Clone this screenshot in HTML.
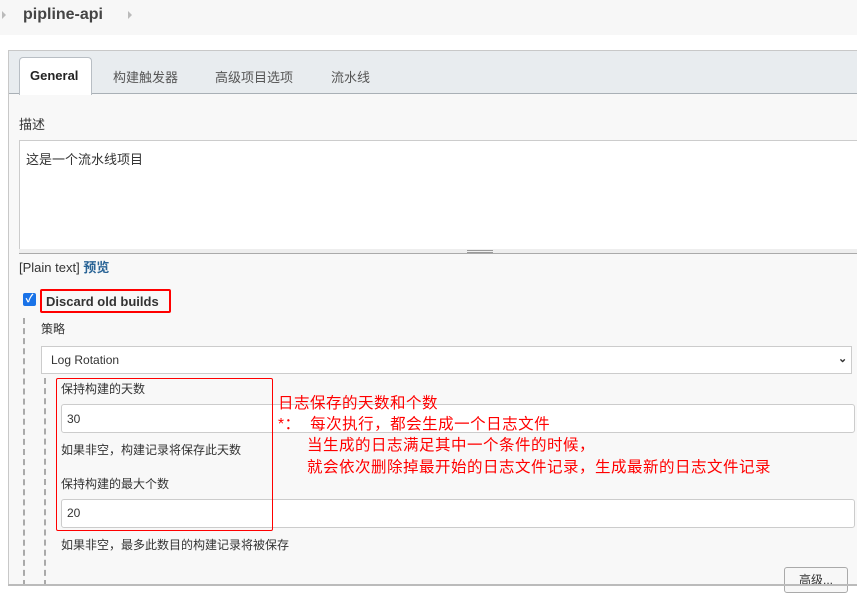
<!DOCTYPE html>
<html><head><meta charset="utf-8"><style>
*{margin:0;padding:0;box-sizing:border-box}
body{width:857px;height:586px;overflow:hidden;background:#fff;font-family:"Liberation Sans","Noto Sans CJK SC",sans-serif;color:#333;position:relative}
.a{position:absolute;white-space:nowrap}
.inp{position:absolute;background:#fff;border:1px solid #ccc;border-radius:3px}
.red{color:#f00;font-size:15.5px;letter-spacing:0.5px}
</style></head><body>
<div class="a" style="left:0;top:0;width:857px;height:35px;background:#f7f7f7"></div>
<div class="a" style="left:2px;top:11px;width:0;height:0;border-left:4px solid #bbb;border-top:4px solid transparent;border-bottom:4px solid transparent"></div>
<div class="a" style="left:128px;top:11px;width:0;height:0;border-left:4px solid #bbb;border-top:4px solid transparent;border-bottom:4px solid transparent"></div>
<div class="a" style="left:23px;top:6px;font-size:16px;font-weight:bold;color:#444">pipline-api</div>

<div class="a" style="left:8px;top:50px;width:860px;height:535px;border:1px solid #c8c8c8;background:#f8f8f8"></div>
<div class="a" style="left:9px;top:51px;width:848px;height:43px;background:#e8ecef;border-bottom:1px solid #a9b0b6"></div>
<div class="a" style="left:19px;top:57px;width:73px;height:38px;background:#fff;border:1px solid #b8bec4;border-bottom:none;border-radius:4px 4px 0 0"></div>
<div class="a" style="left:30px;top:68px;font-size:13px;font-weight:bold;color:#222">General</div>
<div class="a" style="left:113px;top:67px;font-size:13px;color:#555">构建触发器</div>
<div class="a" style="left:215px;top:67px;font-size:13px;color:#555">高级项目选项</div>
<div class="a" style="left:331px;top:67px;font-size:13px;color:#555">流水线</div>

<div class="a" style="left:19px;top:114px;font-size:13px">描述</div>
<div class="inp" style="left:19px;top:140px;width:840px;height:111px;border-radius:0"></div>
<div class="a" style="left:26px;top:149px;font-size:13px">这是一个流水线项目</div>
<div class="a" style="left:19px;top:249px;width:840px;height:5px;background:#eee;border-bottom:1px solid #aaa"></div>
<div class="a" style="left:467px;top:250px;width:26px;height:3px;border-top:1px solid #999;border-bottom:1px solid #999"></div>
<div class="a" style="left:19px;top:257px;font-size:13px">[Plain text] <b style="color:#2a6496">预览</b></div>

<div class="a" style="left:23px;top:293px;width:13px;height:13px;background:#1a73e8;border-radius:2px;color:#fff;font-size:11px;line-height:13px;text-align:center;font-weight:bold">✓</div>
<div class="a" style="left:40px;top:289px;width:131px;height:24px;border:2px solid #f00;border-radius:2px"></div>
<div class="a" style="left:46px;top:294px;font-size:13px;color:#333;font-weight:bold">Discard old builds</div>

<div class="a" style="left:23px;top:318px;height:268px;border-left:2px dashed #aaa"></div>
<div class="a" style="left:41px;top:320px;font-size:12px">策略</div>
<div class="inp" style="left:41px;top:346px;width:811px;height:28px;border-radius:0"></div>
<div class="a" style="left:51px;top:353px;font-size:12px">Log Rotation</div>
<div class="a" style="left:838px;top:352px;font-size:11px;font-weight:bold">⌄</div>

<div class="a" style="left:44px;top:378px;height:208px;border-left:2px dashed #aaa"></div>
<div class="a" style="left:61px;top:380px;font-size:12px">保持构建的天数</div>
<div class="inp" style="left:61px;top:404px;width:794px;height:29px"></div>
<div class="a" style="left:67px;top:412px;font-size:12px">30</div>
<div class="a" style="left:61px;top:441px;font-size:12px">如果非空，构建记录将保存此天数</div>
<div class="a" style="left:61px;top:475px;font-size:12px">保持构建的最大个数</div>
<div class="inp" style="left:61px;top:499px;width:794px;height:29px"></div>
<div class="a" style="left:67px;top:506px;font-size:12px">20</div>
<div class="a" style="left:61px;top:536px;font-size:12px">如果非空，最多此数目的构建记录将被保存</div>
<div class="a" style="left:56px;top:378px;width:217px;height:153px;border:1px solid #f00;border-radius:2px"></div>

<div class="a red" style="left:278px;top:391px">日志保存的天数和个数</div>
<div class="a red" style="left:278px;top:412px">*：&nbsp; 每次执行，都会生成一个日志文件</div>
<div class="a red" style="left:307px;top:433px">当生成的日志满足其中一个条件的时候，</div>
<div class="a red" style="left:307px;top:455px">就会依次删除掉最开始的日志文件记录，生成最新的日志文件记录</div>

<div class="a" style="left:784px;top:567px;width:64px;height:26px;border:1px solid #aaa;border-radius:3px;background:#f7f7f7;font-size:12px;text-align:center;line-height:24px">高级...</div>
<div class="a" style="left:8px;top:584px;width:849px;height:2px;background:#bbb"></div>
</body></html>
